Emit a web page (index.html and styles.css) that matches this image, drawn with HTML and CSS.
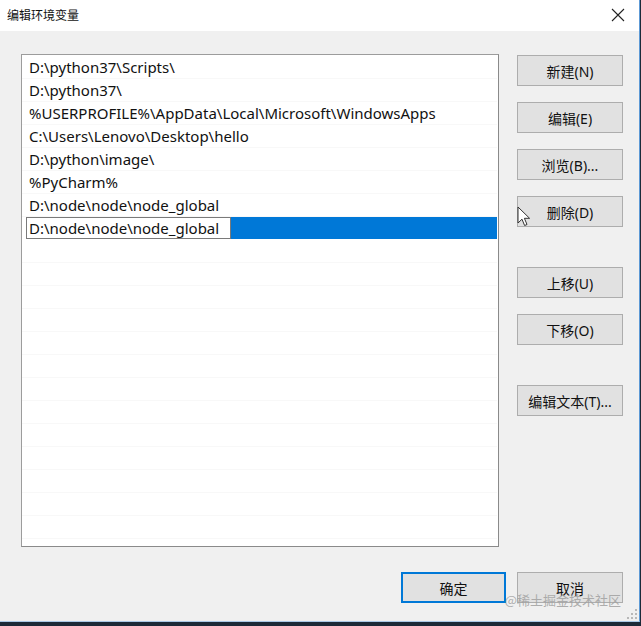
FILE: index.html
```html
<!DOCTYPE html>
<html lang="zh-CN">
<head>
<meta charset="utf-8">
<title>编辑环境变量</title>
<link rel="stylesheet" href="styles.css">
</head>
<body>
<div class="screen">
  <div class="window">
    <div class="titlebar">
      <span class="title">编辑环境变量</span>
      <svg class="close" width="14" height="14" viewBox="0 0 14 14"><path d="M1 1L13 13M13 1L1 13" stroke="#222" stroke-width="1.1" fill="none"/></svg>
    </div>
    <div class="content">
      <div class="main">
        <div class="list">
          <div class="row">D:\python37\Scripts\</div>
          <div class="row">D:\python37\</div>
          <div class="row">%USERPROFILE%\AppData\Local\Microsoft\WindowsApps</div>
          <div class="row">C:\Users\Lenovo\Desktop\hello</div>
          <div class="row">D:\python\image\</div>
          <div class="row">%PyCharm%</div>
          <div class="row">D:\node\node\node_global</div>
          <div class="row edit-row"><span class="edit">D:\node\node\node_global</span><span class="sel"></span></div>
          <div class="row"></div><div class="row"></div><div class="row"></div><div class="row"></div>
          <div class="row"></div><div class="row"></div><div class="row"></div><div class="row"></div>
          <div class="row"></div><div class="row"></div><div class="row"></div><div class="row"></div>
          <div class="row"></div><div class="row"></div><div class="row last"></div>
        </div>
        <div class="side">
          <div class="group">
            <button class="btn">新建(N)</button>
            <button class="btn">编辑(E)</button>
            <button class="btn">浏览(B)...</button>
            <button class="btn">删除(D)</button>
          </div>
          <div class="group">
            <button class="btn">上移(U)</button>
            <button class="btn">下移(O)</button>
          </div>
          <div class="group">
            <button class="btn">编辑文本(T)...</button>
          </div>
        </div>
      </div>
      <div class="footer">
        <button class="btn primary">确定</button>
        <button class="btn">取消</button>
      </div>
      <svg class="grip" width="10" height="10" viewBox="0 0 10 10"><g fill="#b8b8b8"><rect x="8" y="0" width="2" height="2"/><rect x="4" y="4" width="2" height="2"/><rect x="8" y="4" width="2" height="2"/><rect x="0" y="8" width="2" height="2"/><rect x="4" y="8" width="2" height="2"/><rect x="8" y="8" width="2" height="2"/></g></svg>
      <span class="watermark">@稀土掘金技术社区</span>
      <svg class="cursor" width="14" height="22" viewBox="0 0 14 22"><path d="M1 1L1 17L5 13.2L7.6 19.5L10 18.5L7.4 12.3L12.6 12.3Z" fill="#fff" stroke="#333" stroke-width="1" stroke-linejoin="round"/></svg>
    </div>
  </div>
  <div class="taskbar"></div>
</div>
</body>
</html>
```

FILE: styles.css
```css
* { box-sizing: border-box; }
html, body { margin: 0; padding: 0; }
body {
  width: 641px;
  height: 626px;
  overflow: hidden;
  background: #1c2a38;
  font-family: "Noto Sans", "Noto Sans CJK SC", sans-serif;
  color: #111;
}
.screen { width: 641px; height: 626px; display: flex; flex-direction: column; }
.window {
  width: 640px;
  height: 622px;
  border-right: 1px solid #5d9ad6;
  border-bottom: 1px solid #a9c8e6;
  display: flex;
  flex-direction: column;
  background: #f0f0f0;
}
.titlebar {
  height: 31px;
  flex: none;
  background: #fff;
  display: flex;
  align-items: center;
  justify-content: space-between;
  padding: 0 14px 2px 7px;
}
.title { font-size: 12px; font-family: "Noto Sans CJK SC", sans-serif; color: #111; }
.close { display: block; }
.content {
  position: relative;
  flex: 1;
  display: flex;
  flex-direction: column;
  padding: 23px 16px 0 21px;
}
.main { display: flex; gap: 18px; }
.list {
  width: 479px;
  height: 493px;
  background: #fff;
  border: 1px solid #9c9c9c;
  border-right-color: #8a8a8a;
  border-bottom-color: #8a8a8a;
  padding: 1px 1px 0 0;
  overflow: hidden;
  font-size: 15px;
}
.row {
  height: 23px;
  line-height: 22px;
  padding-left: 7px;
  border-bottom: 1px solid #f8f8f8;
  white-space: nowrap;
}
.edit-row { display: flex; padding-left: 4px; border-bottom-color: #fff; }
.edit {
  width: 205px;
  height: 22px;
  border: 1px solid #7a7a7a;
  padding-left: 2px;
  line-height: 20px;
  background: #fff;
}
.sel { flex: 1; height: 22px; background: #0078d7; }
.side { display: flex; flex-direction: column; gap: 40px; padding-top: 1px; }
.group { display: flex; flex-direction: column; gap: 16px; }
.btn {
  width: 106px;
  height: 31px;
  background: #e1e1e1;
  border: 1px solid #adadad;
  font-family: "Noto Sans", "Noto Sans CJK SC", sans-serif;
  font-size: 14px;
  color: #111;
  padding: 0;
  margin: 0;
}
.footer {
  display: flex;
  justify-content: flex-end;
  gap: 11px;
  padding-top: 25px;
}
.primary { border: 2px solid #0078d7; width: 105px; }
.grip { position: absolute; right: 2px; bottom: 2px; }
.watermark {
  position: absolute;
  right: 18px;
  bottom: 12px;
  font-size: 13px;
  color: rgba(160,160,160,0.85);
  font-family: "Noto Sans CJK SC", sans-serif;
}
.cursor { position: absolute; left: 517px; top: 175px; }
.taskbar { flex: none; height: 4px; background: #1c2a38; }
```
